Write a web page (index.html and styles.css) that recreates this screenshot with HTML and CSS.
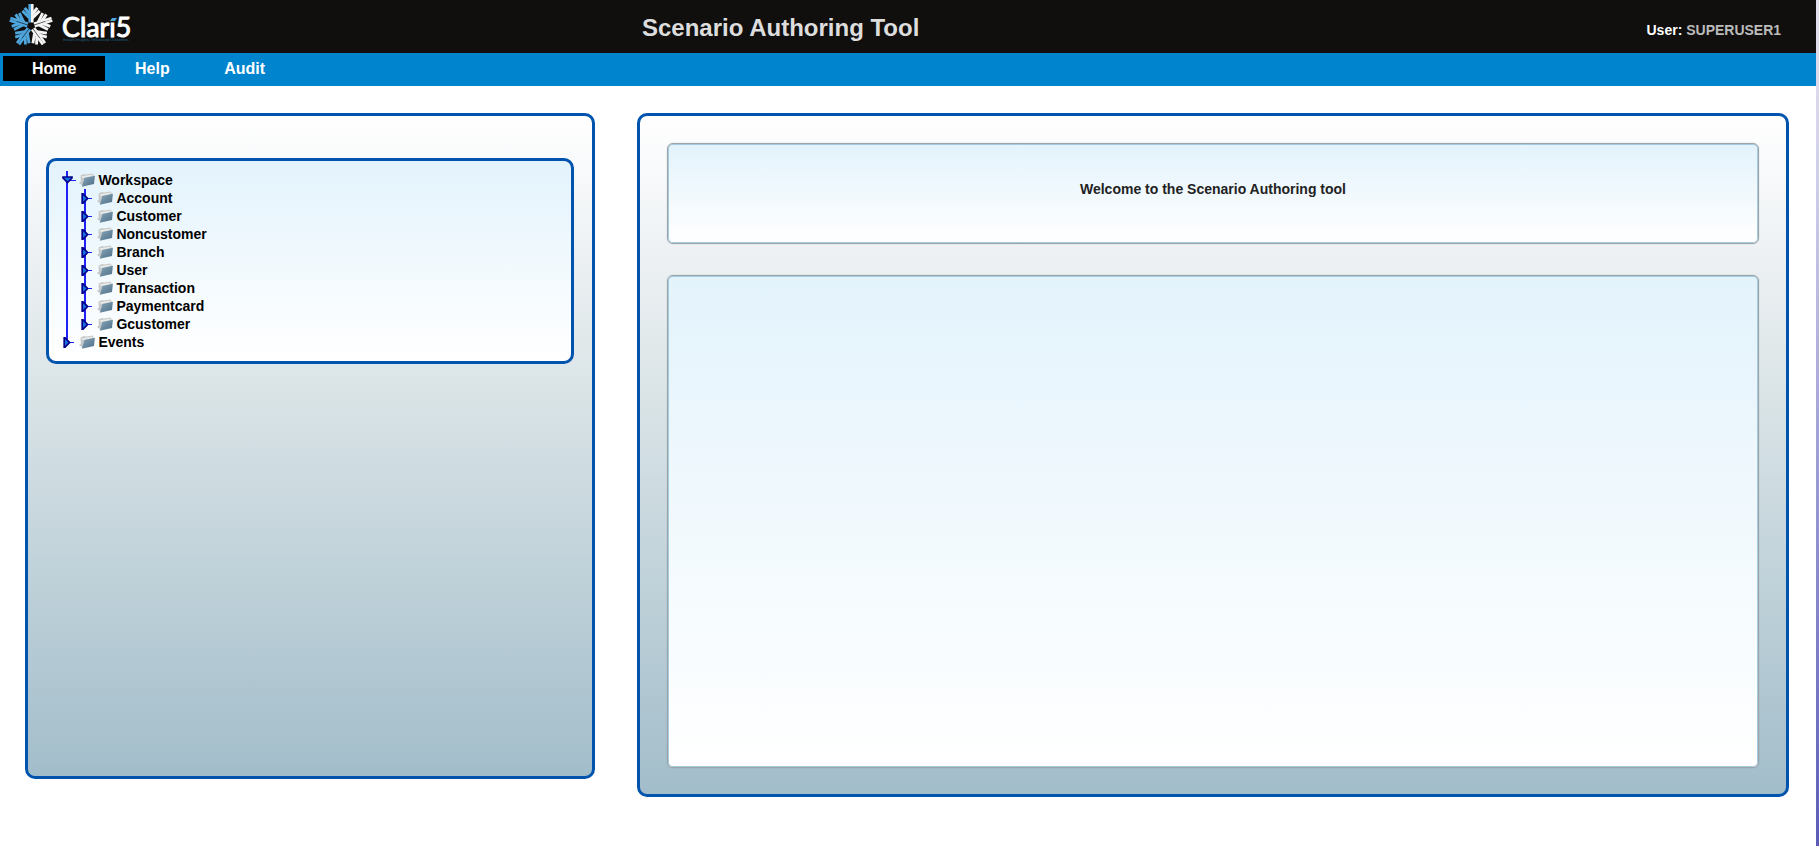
FILE: index.html
```html
<!DOCTYPE html>
<html lang="en">
<head>
<meta charset="utf-8">
<title>Scenario Authoring Tool</title>
<link rel="stylesheet" href="styles.css">
</head>
<body>
<svg class="defs" width="0" height="0" aria-hidden="true">
  <defs>
    <linearGradient id="folderFill" x1="0" y1="0" x2="1" y2="1">
      <stop offset="0" stop-color="#86a4b8"/><stop offset="1" stop-color="#4f7088"/>
    </linearGradient>
    <symbol id="folder" viewBox="0 0 16 14">
      <path d="M1.5 2.6 L5 1 L7 1.6 L13.5 .5 L15 3 L5 6 L4 13 L0 10 L1.8 8.5Z" fill="#c6c9c9"/>
      <path d="M2 3.4 L13 1.4 L13.8 3 L4.4 5Z" fill="#eaeae6"/>
      <path d="M5.4 5 L15.9 2.8 L15 11 L2.8 13.7Z" fill="url(#folderFill)"/>
    </symbol>
    <symbol id="closed" viewBox="0 0 12 11">
      <path d="M6 5.5 H11" stroke="#2020ff" stroke-width="1"/>
      <path d="M1.2 .8 H2 L6.6 5.5 L2 10.2 H1.2Z" fill="#1672e0" stroke="#00008b" stroke-width="1.7"/>
    </symbol>
    <symbol id="open" viewBox="0 0 14 11">
      <path d="M7 5.5 H14" stroke="#2020ff" stroke-width="1"/>
      <path d="M1 2 H10 V3 L5.5 7.6 L1 3Z" fill="#1672e0" stroke="#00008b" stroke-width="1.7"/>
    </symbol>
    <g id="half" fill="none">
      <path d="M-1.3 -3.5 V-22" stroke-width="2.6"/>
      <path d="M-1.5 -8 L-8.6 -15.1 M-1.5 -12 L-6.3 -18.2" stroke-width="2.9"/>
    </g>
    <g id="arm">
      <use href="#half"/><use href="#half" transform="scale(-1 1)"/>
      <path d="M0 -3 V-15" stroke="#100f0d" stroke-opacity=".6" stroke-width=".8"/>
    </g>
  </defs>
</svg>
<div class="page">
  <header class="header">
    <div class="logo">
      <svg class="flake" viewBox="-23 -23 46 46">
        <g stroke="#4ea6dd">
          <use href="#half"/>
          <use href="#arm" transform="rotate(-72)"/>
          <use href="#arm" transform="rotate(-144)"/>
        </g>
        <g stroke="#f4f4f4">
          <use href="#half" transform="scale(-1 1)"/>
          <use href="#arm" transform="rotate(72)"/>
          <use href="#arm" transform="rotate(144)"/>
        </g>
      </svg>
      <div class="brand">
        <span class="brand-name">Clar<span class="dotless">ı</span>5</span>
        <span class="tagline">Instant Insights. Influenced Outcomes.</span>
      </div>
    </div>
    <h1 class="title">Scenario Authoring Tool</h1>
    <div class="user"><b>User:</b> SUPERUSER1</div>
  </header>
  <nav class="nav"><a class="item active">Home</a><a class="item">Help</a><a class="item">Audit</a></nav>
  <main class="main">
    <section class="panel side">
      <div class="tree">
        <div class="row"><svg class="open"><use href="#open"/></svg><svg class="folder"><use href="#folder"/></svg>Workspace</div>
        <div class="children">
          <div class="row"><svg class="closed"><use href="#closed"/></svg><svg class="folder"><use href="#folder"/></svg>Account</div>
          <div class="row"><svg class="closed"><use href="#closed"/></svg><svg class="folder"><use href="#folder"/></svg>Customer</div>
          <div class="row"><svg class="closed"><use href="#closed"/></svg><svg class="folder"><use href="#folder"/></svg>Noncustomer</div>
          <div class="row"><svg class="closed"><use href="#closed"/></svg><svg class="folder"><use href="#folder"/></svg>Branch</div>
          <div class="row"><svg class="closed"><use href="#closed"/></svg><svg class="folder"><use href="#folder"/></svg>User</div>
          <div class="row"><svg class="closed"><use href="#closed"/></svg><svg class="folder"><use href="#folder"/></svg>Transaction</div>
          <div class="row"><svg class="closed"><use href="#closed"/></svg><svg class="folder"><use href="#folder"/></svg>Paymentcard</div>
          <div class="row"><svg class="closed"><use href="#closed"/></svg><svg class="folder"><use href="#folder"/></svg>Gcustomer</div>
        </div>
        <div class="row"><svg class="closed"><use href="#closed"/></svg><svg class="folder"><use href="#folder"/></svg>Events</div>
      </div>
    </section>
    <section class="panel content">
      <div class="box welcome">Welcome to the Scenario Authoring tool</div>
      <div class="box body"></div>
    </section>
  </main>
</div>
</body>
</html>
```
FILE: styles.css
```css
* { box-sizing: border-box; }
body {
  margin: 0;
  height: 846px;
  overflow: hidden;
  padding-right: 3px;
  background: linear-gradient(#e4e1ee 0, #d3d2eb 18%, #5c5cb8 100%);
  font-family: "Liberation Sans", Arial, sans-serif;
}
.defs { position: absolute; }
.page { height: 846px; background: #fff; }
.header {
  height: 53px;
  display: grid;
  grid-template-columns: 642px 1fr 200px;
  background: #100f0d;
}
.logo { display: flex; padding: 3px 0 0 8px; }
.flake { width: 46px; height: 46px; overflow: visible; }
.brand { display: flex; flex-direction: column; padding: 14px 0 0 8px; width: 80px; }
.brand-name {
  height: 20px;
  font: 26.8px/20px Lato, sans-serif;
  color: #fff;
  -webkit-text-stroke: 1px #fff;
  white-space: nowrap;
}
.dotless { position: relative; }
.dotless::after {
  content: "";
  position: absolute;
  left: 2px;
  top: 7px;
  width: 5px;
  height: 3px;
  background: #4ea6dd;
  transform: skewX(-35deg);
}
.tagline { font-size: 3.9px; line-height: 4px; margin-top: 1px; padding-left: 1px; color: #22648c; white-space: nowrap; }
.title { margin: 0; padding-top: 13px; font-size: 24px; line-height: 29px; color: #ddd; }
.user { padding: 22px 0 0 30.5px; font-size: 14px; line-height: 16px; font-weight: bold; color: #bbb; }
.user b { color: #fff; }
.nav { height: 33px; padding: 3px; display: flex; background: #0084ce; }
.item { height: 25px; padding: 0 29px; font-size: 16px; line-height: 25px; font-weight: bold; color: #fff; }
.item.active { width: 102px; background: #000; }
.item + .item { padding: 0 24.5px 0 30px; }
.main { display: flex; align-items: flex-start; gap: 42px; padding: 27px 0 0 25px; }
.panel { border: 3px solid #0054ad; border-radius: 10px; background: linear-gradient(#fff 0%, #e9eef1 25%, #e0e8ea 35%, #a2bdca 100%); }
.side { width: 570px; height: 666px; padding: 42px 18px; }
.tree {
  height: 206px;
  border: 3px solid #0054ad;
  border-radius: 10px;
  padding: 10px 0 0 12px;
  font-size: 14px;
  font-weight: bold;
  color: #000;
  background: linear-gradient(#2020f8, #2020f8) 17px 10px / 2px 170px no-repeat, linear-gradient(#e3f3fc, #fff);
}
.row { height: 18px; display: flex; align-items: center; line-height: 18px; }
.closed { width: 12px; height: 11px; margin: 0 4px 0 2px; }
.open { width: 14px; height: 11px; margin: 0 3px 0 1px; }
.folder { width: 16px; height: 14px; margin-right: 3.4px; }
.children { padding-left: 18px; background: linear-gradient(#2020f8, #2020f8) 23px 0 / 2px 136px no-repeat; }
.content { width: 1152px; height: 684px; padding: 27px 27px 0; }
.box {
  border: 1px solid #9ba4a9;
  border-radius: 6px;
  background: linear-gradient(#e3f3fc, #fff);
  box-shadow: inset 0 0 0 1px #a5cce2, 0 0 1px rgba(110, 110, 110, .6);
}
.welcome { height: 101px; padding-top: 36px; text-align: center; font-size: 14px; line-height: 18px; font-weight: bold; color: #222; }
.body { height: 493px; margin-top: 31px; }
```
